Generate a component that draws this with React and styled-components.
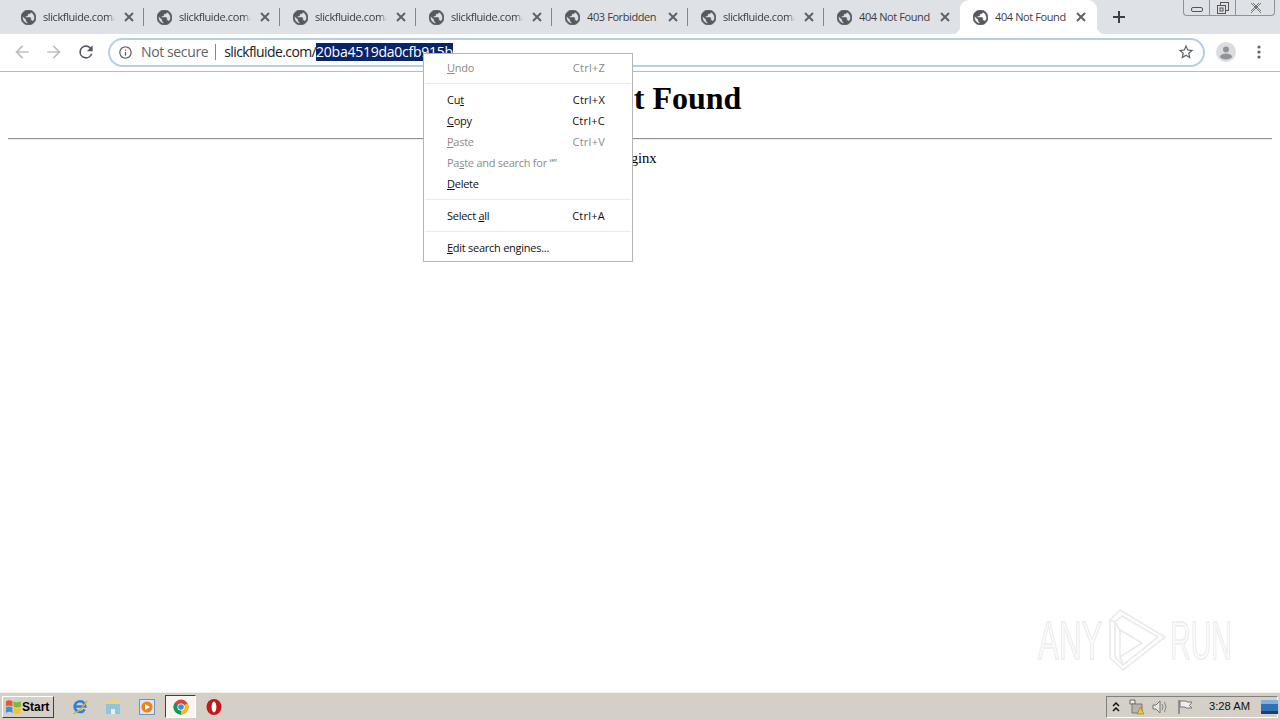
import React from "react";
import styled, { createGlobalStyle } from "styled-components";

const Global = createGlobalStyle`
  html, body { margin: 0; padding: 0; height: 100%; overflow: hidden; background: #fff; }
  #root { height: 100%; }
`;
const UI = `"Open Sans", "Noto Sans", sans-serif`;

const Screen = styled.div`display:flex;flex-direction:column;height:720px;width:1280px;position:relative;overflow:hidden;`;
const TabStrip = styled.div`display:flex;height:34px;flex:none;background:#dee1e6;padding-left:8px;`;
const Tab = styled.div`
  position:relative;display:flex;align-items:center;flex:none;width:${p=>p.$active?137:136}px;height:34px;
  padding:0 0 0 13px;box-sizing:border-box;font:11px/1 ${UI};letter-spacing:-.4px;color:#3c4043;
  ${p=>p.$active?`background:#fff;border-radius:9px 9px 0 0;
    &::before,&::after{content:"";position:absolute;bottom:0;width:8px;height:8px;}
    &::before{left:-8px;background:radial-gradient(circle at 0 0,transparent 8px,#fff 8.5px);}
    &::after{right:-8px;background:radial-gradient(circle at 100% 0,transparent 8px,#fff 8.5px);}`:""}
  ${p=>p.$sep?`&::after{content:"";position:absolute;right:0;top:8px;height:18px;width:1px;background:#80868b;}`:""}
`;
const TabFav = styled.svg`width:15px;height:15px;flex:none;fill:#55595e;stroke:#55595e;stroke-width:.7;margin-right:7px;`;
const TabTitle = styled.span`width:72px;flex:none;white-space:nowrap;overflow:hidden;margin-top:-1px;
  ${p=>p.$fade?`-webkit-mask-image:linear-gradient(90deg,#000 90%,transparent 100%);mask-image:linear-gradient(90deg,#000 90%,transparent 100%);`:""}`;
const TabClose = styled.svg`width:10px;height:10px;flex:none;stroke:#5f6368;stroke-width:2;fill:none;margin-left:9px;`;
const NewTab = styled.svg`width:14px;height:14px;flex:none;stroke:#3c4043;stroke-width:2;margin:10px 0 0 15px;`;
const WinButtons = styled.div`margin-left:auto;margin-right:5px;display:flex;height:16px;width:92px;box-sizing:border-box;
  border:1px solid #8d939c;border-top:none;border-radius:0 0 4px 4px;background:#dee1e6;`;
const WinBtn = styled.div`display:flex;align-items:center;justify-content:center;width:${p=>p.$w}px;flex:none;
  ${p=>p.$line?"border-right:1px solid #8d939c;":""}`;
const WinIcon = styled.svg`width:12px;height:12px;fill:none;stroke:${p=>p.$c||"#555"};stroke-width:1;`;

const Toolbar = styled.div`display:flex;align-items:center;flex:none;height:38px;padding-bottom:1px;background:#fff;border-bottom:1px solid #b8babd;box-sizing:border-box;`;
const NavIcon = styled.svg`width:20px;height:20px;flex:none;fill:${p=>p.$c};margin-left:${p=>p.$ml}px;`;
const Omnibox = styled.div`display:flex;align-items:center;flex:none;width:1097px;height:29px;box-sizing:border-box;margin:1px 0 0 12px;
  border:2px solid #b6cfe8;border-radius:15px;font:14px/1 ${UI};white-space:nowrap;padding:0 0 1px 8px;`;
const InfoIcon = styled.svg`width:15px;height:15px;flex:none;fill:#5f6368;`;
const NotSecure = styled.span`color:#5f6368;margin-left:8px;letter-spacing:-.38px;`;
const Divider = styled.span`width:1px;height:16px;background:#80868b;margin:0 8px 0 7px;flex:none;`;
const Url = styled.span`color:#202124;letter-spacing:-.6px;`;
const Selected = styled.span`background:#0a246a;color:#fff;line-height:18px;letter-spacing:-.25px;`;
const Star = styled.svg`width:18px;height:18px;margin-left:auto;margin-right:8px;fill:#5f6368;flex:none;`;
const Avatar = styled.svg`width:20px;height:20px;flex:none;margin-left:11px;`;
const Kebab = styled.svg`width:4px;height:14px;flex:none;fill:#5f6368;margin-left:21px;`;

const Page = styled.main`position:relative;flex:1;background:#fff;padding:8px;color:#000;font-family:"Liberation Serif",serif;`;
const Heading = styled.h1`margin:0 0 21.44px;text-align:center;font-size:32px;line-height:37px;font-weight:bold;`;
const Rule = styled.hr`margin:0 0 9px;height:2px;box-sizing:border-box;border:none;border-top:1px solid #909090;border-bottom:1px solid #eee;`;
const Server = styled.div`text-align:center;font-size:14.67px;line-height:18px;`;

const Watermark = styled.div`position:absolute;left:1038px;top:536px;display:flex;align-items:center;height:64px;
  font:54px/1 "Liberation Sans",sans-serif;color:#fafafa;-webkit-text-stroke:1.5px #ececec;`;
const WmText = styled.span`display:inline-block;width:${p=>p.$w}px;transform:scaleX(${p=>p.$s});transform-origin:0 50%;white-space:nowrap;`;
const WmLogo = styled.svg`width:58px;height:64px;flex:none;fill:none;stroke:#e9e9e9;stroke-width:1.5;margin:0 4px 0 5px;`;

const Menu = styled.div`position:absolute;left:423px;top:53px;width:210px;height:209px;box-sizing:border-box;background:#fff;
  border:1px solid #b5b5b5;padding:3px 0;font:11px/21px ${UI};letter-spacing:-.26px;`;
const MenuRow = styled.div`display:flex;justify-content:space-between;height:21px;padding:0 27px 0 23px;color:${p=>p.$off?"#8a8a8a":"#111"};`;
const MenuSep = styled.div`height:1px;background:#e9e9e9;margin:5px 1px;`;
const Key = styled.span`text-decoration:underline;`;
const Shortcut = styled.span`letter-spacing:.25px;`;

const Taskbar = styled.footer`display:flex;align-items:center;flex:none;height:28px;background:#d4d0c8;border-top:1px solid #f2f0ea;box-sizing:border-box;position:relative;`;
const StartBtn = styled.div`display:flex;align-items:center;width:52px;height:22px;margin-left:2px;padding-left:2px;box-sizing:border-box;flex:none;
  border:1px solid;border-color:#fff #404040 #404040 #fff;font:bold 12px/1 "Liberation Sans",sans-serif;color:#000;background:#d4d0c8;`;
const QuickIcon = styled.svg`width:18px;height:18px;flex:none;margin-left:${p=>p.$ml}px;`;
const ActiveApp = styled.div`display:flex;align-items:center;justify-content:center;width:31px;height:23px;box-sizing:border-box;flex:none;margin-left:9px;
  background:#f6f5f2;border:1px solid;border-color:#404040 #fff #fff #404040;`;
const Tray = styled.div`display:flex;align-items:center;height:22px;margin-left:auto;margin-right:2px;box-sizing:border-box;width:172px;padding-left:3px;
  border:1px solid;border-color:#808080 #fff #fff #808080;font:11.2px/1 "Liberation Sans",sans-serif;color:#111;`;
const TrayIcon = styled.svg`width:${p=>p.$w||16}px;height:16px;flex:none;margin-left:${p=>p.$ml||0}px;`;
const Clock = styled.span`margin-left:15px;white-space:nowrap;`;

const GLOBE="M12 2C6.48 2 2 6.48 2 12s4.48 10 10 10 10-4.48 10-10S17.52 2 12 2zm-1 17.93c-3.95-.49-7-3.85-7-7.93 0-.62.08-1.21.21-1.79L9 15v1c0 1.1.9 2 2 2v1.93zm6.9-2.54c-.26-.81-1-1.39-1.9-1.39h-1v-3c0-.55-.45-1-1-1H8v-2h2c.55 0 1-.45 1-1V7h2c1.1 0 2-.9 2-2v-.41c2.93 1.19 5 4.06 5 7.41 0 2.08-.8 3.97-2.1 5.39z";
const tabs=[
  {t:"slickfluide.com/",fade:1,sep:1},{t:"slickfluide.com/",fade:1,sep:1},{t:"slickfluide.com/",fade:1,sep:1},{t:"slickfluide.com/",fade:1,sep:1},
  {t:"403 Forbidden",sep:1},{t:"slickfluide.com/",fade:1,sep:1},{t:"404 Not Found"},{t:"404 Not Found",active:1},
];
const menu=[
  {l:["","U","ndo"],k:"Ctrl+Z",off:1},{sep:1},
  {l:["Cu","t",""],k:"Ctrl+X"},{l:["","C","opy"],k:"Ctrl+C"},{l:["","P","aste"],k:"Ctrl+V",off:1},
  {l:["Pa","s","te and search for “”"],off:1},{l:["","D","elete"]},{sep:1},
  {l:["Select ","a","ll"],k:"Ctrl+A"},{sep:1},{l:["","E","dit search engines..."]},
];

export default function App(){
  return <Screen>
    <Global/>
    <TabStrip>
      {tabs.map((x,i)=><Tab key={i} $active={x.active} $sep={x.sep}>
        <TabFav viewBox="2 2 20 20"><path d={GLOBE}/></TabFav>
        <TabTitle $fade={x.fade}>{x.t}</TabTitle>
        <TabClose viewBox="0 0 10 10"><path d="M1 1l8 8M9 1l-8 8"/></TabClose>
      </Tab>)}
      <NewTab viewBox="0 0 14 14"><path d="M7 1v12M1 7h12"/></NewTab>
      <WinButtons>
        <WinBtn $w={25} $line><WinIcon viewBox="0 0 12 12"><rect x=".5" y="5.5" width="11" height="4" rx="1.5"/></WinIcon></WinBtn>
        <WinBtn $w={25} $line><WinIcon viewBox="0 0 12 12"><rect x="3.5" y=".5" width="8" height="8"/><rect x=".5" y="3.5" width="8" height="8" fill="#dee1e6"/><rect x="3" y="6" width="3" height="3"/></WinIcon></WinBtn>
        <WinBtn $w={40}><WinIcon $c="#777" viewBox="0 0 12 12"><path d="M1 1l10 10M11 1L1 11M3 1l8 8M9 1L1 9"/></WinIcon></WinBtn>
      </WinButtons>
    </TabStrip>
    <Toolbar>
      <NavIcon $c="#bcc0c5" $ml={12} viewBox="0 0 24 24"><path d="M20 11H7.83l5.59-5.59L12 4l-8 8 8 8 1.41-1.41L7.83 13H20v-2z"/></NavIcon>
      <NavIcon $c="#bcc0c5" $ml={12} viewBox="0 0 24 24"><path d="M4 11h12.17l-5.59-5.59L12 4l8 8-8 8-1.41-1.41L16.17 13H4v-2z"/></NavIcon>
      <NavIcon $c="#55595e" $ml={12} viewBox="0 0 24 24"><path d="M17.65 6.35A7.96 7.96 0 0 0 12 4a8 8 0 1 0 7.73 10h-2.08A6 6 0 1 1 12 6c1.66 0 3.14.69 4.22 1.78L13 11h7V4l-2.35 2.35z"/></NavIcon>
      <Omnibox>
        <InfoIcon viewBox="0 0 24 24"><path d="M11 7h2v2h-2V7zm0 4h2v6h-2v-6zm1-9C6.48 2 2 6.48 2 12s4.48 10 10 10 10-4.48 10-10S17.52 2 12 2zm0 18c-4.41 0-8-3.59-8-8s3.59-8 8-8 8 3.59 8 8-3.59 8-8 8z"/></InfoIcon>
        <NotSecure>Not secure</NotSecure>
        <Divider/>
        <Url>slickfluide.com/</Url><Selected>20ba4519da0cfb915b</Selected>
        <Star viewBox="0 0 24 24"><path d="M22 9.24l-7.19-.62L12 2 9.19 8.63 2 9.24l5.46 4.73L5.82 21 12 17.27 18.18 21l-1.63-7.03L22 9.24zM12 15.4l-3.76 2.27 1-4.28-3.32-2.88 4.38-.38L12 6.1l1.71 4.04 4.38.38-3.32 2.88 1 4.28L12 15.4z"/></Star>
      </Omnibox>
      <Avatar viewBox="0 0 20 20"><circle cx="10" cy="10" r="10" fill="#dadce0"/><circle cx="10" cy="7.5" r="3" fill="#8f9499"/><ellipse cx="10" cy="14.5" rx="6" ry="3" fill="#8f9499"/></Avatar>
      <Kebab viewBox="0 0 4 14"><circle cx="2" cy="2" r="1.6"/><circle cx="2" cy="7" r="1.6"/><circle cx="2" cy="12" r="1.6"/></Kebab>
    </Toolbar>
    <Page>
      <Heading>404 Not Found</Heading>
      <Rule/>
      <Server>nginx</Server>
      <Watermark>
        <WmText $w={65} $s={.58}>ANY</WmText>
        <WmLogo viewBox="0 0 58 64">
          <path d="M2 12L12 2l45 27-42 33L2 50z"/>
          <path d="M7 14l7-6 36 21-35 28-8-8z"/>
          <path d="M12 22l22 13-22 14z"/>
          <path d="M2 12l5 2M12 22l-5-8M12 49l3 8"/>
        </WmLogo>
        <WmText $w={62} $s={.53}>RUN</WmText>
      </Watermark>
    </Page>
    <Menu>
      {menu.map((m,i)=>m.sep?<MenuSep key={i}/>:<MenuRow key={i} $off={m.off}>
        <span>{m.l[0]}<Key>{m.l[1]}</Key>{m.l[2]}</span>{m.k&&<Shortcut>{m.k}</Shortcut>}
      </MenuRow>)}
    </Menu>
    <Taskbar>
      <StartBtn>
        <svg width="17" height="17" viewBox="0 0 16 16"><path d="M1 3q3-2 6 0v5q-3-2-6 0z" fill="#e2572b"/><path d="M8 3q3 2 7 0v5q-4 2-7 0z" fill="#7cb93a"/><path d="M1 9q3-2 6 0v5q-3-2-6 0z" fill="#3f8fd8"/><path d="M8 9q3 2 7 0v5q-4 2-7 0z" fill="#f2c230"/></svg>
        Start
      </StartBtn>
      <QuickIcon $ml={17} viewBox="0 0 18 18"><path d="M13.6 11.5A5.4 5.4 0 1 1 14.4 8.5H4.5" fill="none" stroke="#2f7fd6" strokeWidth="2.6"/><path d="M2 15.5C5 16 14 8 16 2.5" fill="none" stroke="#e0b030" strokeWidth="1.4"/></QuickIcon>
      <QuickIcon $ml={15} viewBox="0 0 18 18"><path d="M2 4h5l1-2h8v13H2z" fill="#e8d48a"/><path d="M2 6h14v10H2z" fill="#8fc4dc"/><path d="M7 16v-5h4v5z" fill="#e8eef2"/></QuickIcon>
      <QuickIcon $ml={16} viewBox="0 0 18 18"><rect x="1.5" y="1.5" width="15" height="15" fill="#dde6f0" stroke="#6f94bd"/><circle cx="9" cy="9" r="5.6" fill="#e9851f"/><path d="M7 6l5 3-5 3z" fill="#fff"/></QuickIcon>
      <ActiveApp>
        <svg width="16" height="16" viewBox="0 0 16 16"><circle cx="8" cy="8" r="7.5" fill="#db4437"/><path d="M8 8L1.5 4.3A7.5 7.5 0 0 0 8 15.5z" fill="#0f9d58"/><path d="M8 8l6.5-3.7A7.5 7.5 0 0 1 8 15.5z" fill="#f4c20d"/><circle cx="8" cy="8" r="3.6" fill="#fff"/><circle cx="8" cy="8" r="2.8" fill="#4285f4"/></svg>
      </ActiveApp>
      <QuickIcon $ml={9} viewBox="0 0 18 18"><ellipse cx="9" cy="9" rx="7.5" ry="8" fill="#c4161c"/><ellipse cx="9" cy="9" rx="2.4" ry="5.4" fill="#fff"/></QuickIcon>
      <Tray>
        <TrayIcon $w={12} viewBox="0 0 12 16"><path d="M3 7l3-3 3 3M3 12l3-3 3 3" fill="none" stroke="#111" strokeWidth="1.5"/></TrayIcon>
        <TrayIcon $w={18} $ml={6} viewBox="0 0 18 16"><path d="M2 1h5v4H2z" fill="#f0eee8" stroke="#666"/><path d="M4 5h10v9H4z" fill="#b9b5a8" stroke="#777"/><path d="M9 15l3.5-7 3.5 7z" fill="#f2c230" stroke="#8a6d00" strokeWidth=".5"/></TrayIcon>
        <TrayIcon $w={17} $ml={6} viewBox="0 0 17 16"><path d="M1 6h3l4-4v12l-4-4H1z" fill="#e8e6e0" stroke="#777"/><path d="M10 5q2 3 0 6M12.5 3q3 5 0 10" fill="none" stroke="#888"/></TrayIcon>
        <TrayIcon $w={17} $ml={8} viewBox="0 0 17 16"><path d="M2 1v14" stroke="#777" strokeWidth="1.4"/><path d="M3 2h6l1 1h5l-2.5 3.5L15 9H9L8 8H3z" fill="#eee" stroke="#777"/></TrayIcon>
        <Clock>3:28 AM</Clock>
        <TrayIcon $w={17} $ml={11} viewBox="0 0 17 16"><rect x="0" y="1" width="17" height="14" fill="#2f72b8"/><rect x="0" y="1" width="17" height="4" fill="#7fb2de"/><rect x="0" y="12" width="17" height="3" fill="#1a3f70"/></TrayIcon>
      </Tray>
    </Taskbar>
  </Screen>;
}
